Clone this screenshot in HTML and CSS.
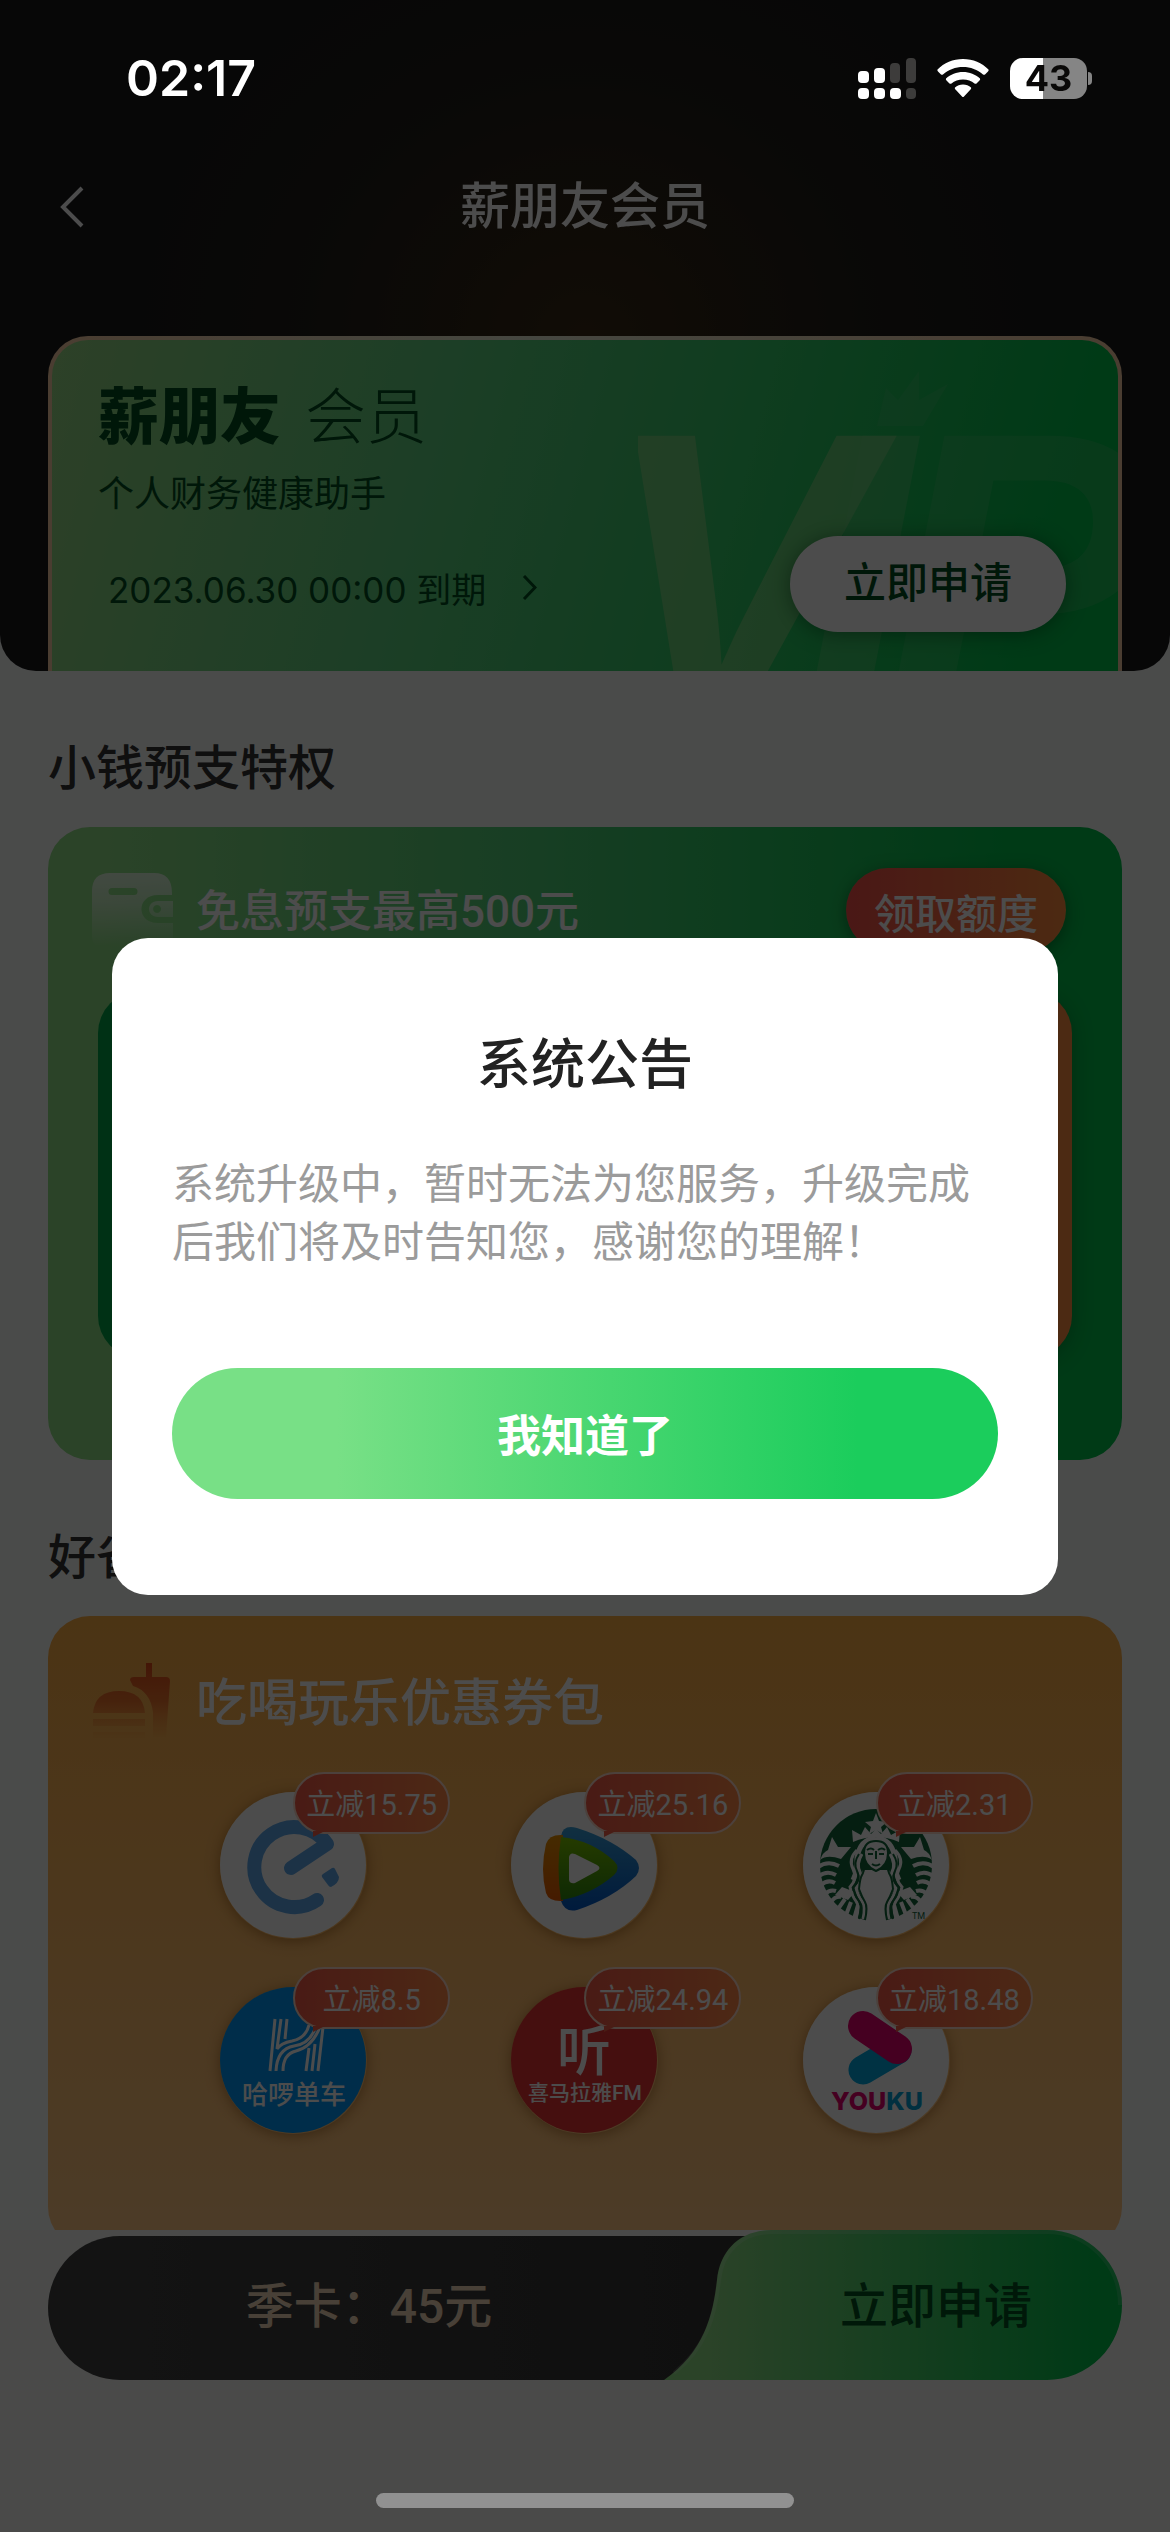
FILE: index.html
```html
<!DOCTYPE html>
<html lang="zh-CN">
<head>
    <meta charset="UTF-8">
    <meta name="viewport" content="width=device-width, initial-scale=1.0">
    <title>薪朋友会员</title>
    <link rel="stylesheet" href="styles.css">
</head>
<body>

    <!-- 状态栏 -->
    <div class="status-bar">
        <span class="time">02:17</span>
        <div class="status-icons">
            <svg class="signal" viewBox="0 0 58 41" width="58" height="41">
                <g fill="#fff">
                    <rect x="0" y="13" width="11" height="12" rx="4"/>
                    <rect x="16" y="10" width="11" height="15" rx="4"/>
                    <rect x="0" y="30" width="11" height="11" rx="4"/>
                    <rect x="16" y="30" width="11" height="11" rx="4"/>
                    <rect x="32" y="30" width="11" height="11" rx="4"/>
                </g>
                <g fill="#3d3c3b">
                    <rect x="32" y="5" width="10" height="20" rx="4"/>
                    <rect x="48" y="0" width="10" height="25" rx="4"/>
                    <rect x="48" y="30" width="10" height="11" rx="4"/>
                </g>
            </svg>
            <svg class="wifi" viewBox="0 0 52 38" width="52" height="38">
                <path d="M26 0C36 0 45 4 51.500 10.500Q52 11.500 51 12.500L48 15.500Q47 16 46 15.500C40.500 10.500 33.500 8 26 8S11.500 10.500 6 15.500Q5 16 4 15.500L1 12.500Q0 11.500 .5 10.500C7 4 16 0 26 0Z" fill="#fff"/>
                <path d="M26 13C32.500 13 38.500 15.500 43 19.500Q43.500 20.500 42.500 21.500L39.500 24.500Q38.500 25 37.500 24.500C34.500 22 30.500 20.500 26 20.500S17.500 22 14.500 24.500Q13.500 25 12.500 24.500L9.500 21.500Q8.500 20.500 9 19.500C13.500 15.500 19.500 13 26 13Z" fill="#fff"/>
                <path d="M26 25.500C29 25.500 32 26.500 34 28.500Q34.500 29.500 33.500 30.500L27 37.500Q26 38.500 25 37.500L18.500 30.500Q17.500 29.500 18 28.500C20 26.500 23 25.500 26 25.500Z" fill="#fff"/>
            </svg>
            <div class="battery"><span>43</span></div>
        </div>
    </div>

    <!-- 顶部会员卡 -->
    <header class="header">
        <nav class="nav">
            <a href="#" class="back" aria-label="返回">
                <svg viewBox="0 0 24 42" width="24" height="42"><path d="M22 2L3 21l19 19" fill="none" stroke="#fff" stroke-width="4"/></svg>
            </a>
            <h1>薪朋友会员</h1>
        </nav>

        <div class="vip-card">
            <svg class="vip-mark" viewBox="0 0 480 335" width="480" height="335" aria-hidden="true">
                <path d="M239 86l9-38 12 12 21-29v29l29-16-25 42z" fill="#3cc86c" fill-opacity=".5"/>
                <g class="vip-text">
                    <text x="-36" y="371" fill="#a4d98c" fill-opacity=".5">V</text>
                    <text x="164" y="371" fill="#6cd080" fill-opacity=".4">I</text>
                    <text x="246" y="371" fill="#58cc7c" fill-opacity=".3">P</text>
                </g>
            </svg>
            <div class="brand"><b>薪朋友</b><span>会员</span></div>
            <p class="slogan">个人财务健康助手</p>
            <div class="vip-row">
                <a href="#" class="expire">2023.06.30 00:00 到期
                    <svg viewBox="0 0 15 25" width="15" height="25"><path d="M2 1l11 11.500L2 24" fill="none" stroke="#004d1f" stroke-width="3"/></svg>
                </a>
                <button class="apply">立即申请</button>
            </div>
        </div>
    </header>

    <main class="content">
        <h2>小钱预支特权</h2>
        <section class="card green-card">
            <div class="card-head">
                <svg class="head-icon" viewBox="0 0 82 74" width="82" height="74">
                    <defs>
                        <linearGradient id="wallet" x1="0" y1="0" x2="0" y2="74" gradientUnits="userSpaceOnUse">
                            <stop offset="0" stop-color="#fff" stop-opacity=".7"/>
                            <stop offset=".4" stop-color="#fff" stop-opacity=".5"/>
                            <stop offset="1" stop-color="#fff" stop-opacity="0"/>
                        </linearGradient>
                    </defs>
                    <path fill="url(#wallet)" fill-rule="evenodd" d="M18 0H62Q80 0 80 20V22H66C44 22 44 50 66 50H81V64Q81 74 70 74H10Q0 74 0 64V18Q0 0 18 0ZM20 15a3 3 0 0 0 0 7H42a3 3 0 0 0 0-7Z"/>
                    <path fill="url(#wallet)" fill-rule="evenodd" d="M66 28H81V44H66C54 44 54 28 66 28ZM65 32a4 4 0 1 0 .1 0Z"/>
                </svg>
                <h3>免息预支最高500元</h3>
                <button class="claim">领取额度</button>
            </div>
            <div class="plans">
                <div class="plan plan-dark"></div>
                <div class="plan plan-orange"></div>
            </div>
        </section>

        <h2>好省</h2>
        <section class="card orange-card">
            <div class="card-head">
                <svg class="head-icon" viewBox="0 0 82 78" width="82" height="78">
                    <defs>
                        <linearGradient id="food" x1="0" y1="0" x2="0" y2="78" gradientUnits="userSpaceOnUse">
                            <stop offset="0" stop-color="#e24a18"/>
                            <stop offset=".5" stop-color="#e86524" stop-opacity=".8"/>
                            <stop offset="1" stop-color="#f58a35" stop-opacity="0"/>
                        </linearGradient>
                    </defs>
                    <g fill="url(#food)">
                        <path d="M54 0h6v14h14q4 0 4 4l-4 56H61V49Q58 28 41 23l-3-6q0-3 4-3h12z"/>
                        <path d="M1 50Q3 28 27 28T53 50Z"/>
                        <path d="M1 56H53V63H1ZM1 69H53V75H1Z"/>
                    </g>
                </svg>
                <h3 class="big">吃喝玩乐优惠券包</h3>
            </div>

            <div class="coupons">
                <div class="coupon">
                    <svg viewBox="0 0 147 147" role="img" aria-label="饿了么">
                        <circle cx="73" cy="73" r="73" fill="#fff"/>
                        <path d="M97 108A40 40 0 1 1 107 52L71 76" fill="none" stroke="#5fa9ea" stroke-width="14" stroke-linejoin="round" stroke-linecap="round"/>
                        <path d="M103 82l9-6q2-1 3 1l4 8q0 6-8 10-2 0-3-2l-6-8q-1-2 1-3z" fill="#5fa9ea"/>
                    </svg>
                    <span class="badge">立减15.75</span>
                </div>
                <div class="coupon">
                    <svg viewBox="0 0 147 147" role="img" aria-label="腾讯视频">
                        <defs>
                            <linearGradient id="tvb" x1="0" y1="0" x2="0" y2="1"><stop offset="0" stop-color="#3aa0d8"/><stop offset="1" stop-color="#0058c8"/></linearGradient>
                            <linearGradient id="tvo" x1="0" y1="0" x2="0" y2="1"><stop offset="0" stop-color="#e89000"/><stop offset="1" stop-color="#e85a00"/></linearGradient>
                            <linearGradient id="tvg" x1="0" y1="0" x2="0" y2="1"><stop offset="0" stop-color="#7cc400"/><stop offset="1" stop-color="#2f8a10"/></linearGradient>
                        </defs>
                        <circle cx="73" cy="73" r="73" fill="#fff"/>
                        <path d="M50 44Q52 32 66 36 101 47 125 68 131 76 125 84 102 106 66 118 54 121 50 109Z" fill="url(#tvb)"/>
                        <path d="M52 43Q38 42 35 52 29 77 35 101 38 110 52 109Z" fill="url(#tvo)"/>
                        <path d="M50 45Q80 48 103 69 110 76 103 83 80 103 50 108 45 76 50 45Z" fill="url(#tvg)"/>
                        <path d="M58 65Q59 60 64 62L86 73Q91 76 86 79L64 91Q59 92 58 88Z" fill="#fff"/>
                    </svg>
                    <span class="badge">立减25.16</span>
                </div>
                <div class="coupon">
                    <svg viewBox="0 0 147 147" role="img" aria-label="星巴克">
                        <circle cx="73" cy="73" r="73" fill="#fff"/>
                        <circle cx="73" cy="73" r="56" fill="#12663a"/>
                        <!-- 皇冠和星星 -->
                        <path d="M73 21l3 8 8 1-6 5 2 7-7-4-7 4 2-7-6-5 8-1z" fill="#fff"/>
                        <path d="M50 50L49 38 58 43 62 35 68 42 73 37 78 42 84 35 88 43 97 38 96 50Q73 40 50 50Z" fill="#fff"/>
                        <!-- 双尾 -->
                        <g fill="#fff">
                            <path d="M29 45L35 55 48 55 38 67Q24 62 17 68 20 60 25 58Z"/>
                            <path d="M117 45L111 55 98 55 108 67Q122 62 129 68 126 60 121 58Z"/>
                            <path d="M32 103L39 95 52 100 45 108Z"/>
                            <path d="M114 103L107 95 94 100 101 108Z"/>
                        </g>
                        <g fill="none" stroke="#fff" stroke-width="4">
                            <path d="M15 75q10-7 21-1M16 84q8-6 17-1M18 93q7-6 14-2M22 102q5-5 11-3M28 110q4-6 10-5M35 117l7-10M43 123l5-13M51 127l4-14"/>
                            <path d="M131 75q-10-7-21-1M130 84q-8-6-17-1M128 93q-7-6-14-2M124 102q-5-5-11-3M118 110q-4-6-10-5M111 117l-7-10M103 123l-5-13M95 127l-4-14"/>
                        </g>
                        <!-- 身体和头发 -->
                        <path d="M60 78L86 78 92 96 83 113 83 131 63 131 63 113 54 96Z" fill="#fff"/>
                        <path d="M73 46Q57 47 54 66 55 78 50 88M73 46Q89 47 92 66 91 78 96 88" fill="none" stroke="#fff" stroke-width="5"/>
                        <g fill="none" stroke="#fff" stroke-width="3">
                            <path d="M54 58q-9 9-4 19t-3 18q2 9 6 14t0 18M59 62q-6 10-2 18t-4 16q2 8 6 13t1 18"/>
                            <path d="M92 58q9 9 4 19t3 18q-2 9-6 14t0 18M87 62q6 10 2 18t4 16q-2 8-6 13t-1 18"/>
                        </g>
                        <g fill="none" stroke="#12663a" stroke-width="2">
                            <path d="M56 62q-6 9-2 17t-4 17q2 8 6 13t0 18M62 72q-1 8-3 11t-3 14q3 8 6 13t0 18"/>
                            <path d="M90 62q6 9 2 17t4 17q-2 8-6 13t0 18M84 72q1 8 3 11t3 14q-3 8-6 13t0 18"/>
                        </g>
                        <path d="M61 61Q61 49 73 49T85 61Q85 74 73 79 61 74 61 61Z" fill="#fff" stroke="#12663a" stroke-width="2"/>
                        <path d="M64 58q4-3 7 0M75 58q4-3 7 0M65 62h5M76 62h5M73 59v8M69 72q4 3 8 0" fill="none" stroke="#12663a" stroke-width="2"/>
                        <text x="109" y="127" font-size="9" fill="#12663a">TM</text>
                    </svg>
                    <span class="badge">立减2.31</span>
                </div>
                <div class="coupon">
                    <svg viewBox="0 0 147 147" role="img" aria-label="哈啰单车">
                        <circle cx="73" cy="73" r="73" fill="#0098f8"/>
                        <g fill="none" stroke="#fff" stroke-width="3">
                            <path d="M55 32L50 84M61 32L57 62Q61 56 72 54 86 51 89 38M67 32L65 52M56 84Q57 62 74 59 89 57 95 42M63 84Q63 67 76 64 92 60 100 40M86 84L89 61M92 84L95 57M98 84L103 40"/>
                        </g>
                        <text x="74" y="117" font-size="26" font-weight="500" text-anchor="middle" fill="#fff">哈啰单车</text>
                    </svg>
                    <span class="badge">立减8.5</span>
                </div>
                <div class="coupon">
                    <svg viewBox="0 0 147 147" role="img" aria-label="喜马拉雅FM">
                        <circle cx="73" cy="73" r="73" fill="#e63432"/>
                        <text x="73" y="84" font-size="54" font-weight="500" text-anchor="middle" fill="#fff">听</text>
                        <text x="74" y="113" font-size="21" font-weight="500" text-anchor="middle" fill="#fff">喜马拉雅FM</text>
                    </svg>
                    <span class="badge">立减24.94</span>
                </div>
                <div class="coupon">
                    <svg viewBox="0 0 147 147" role="img" aria-label="优酷">
                        <circle cx="73" cy="73" r="73" fill="#fff"/>
                        <path d="M60 83L94 63" stroke="#00a8e0" stroke-width="29" stroke-linecap="round"/>
                        <path d="M60 39L94 62" stroke="#e6006e" stroke-width="30" stroke-linecap="round"/>
                        <text class="youku" x="74" y="123" text-anchor="middle" fill="#e6006e">YOU<tspan fill="#00a0d8">KU</tspan></text>
                    </svg>
                    <span class="badge">立减18.48</span>
                </div>
            </div>
        </section>
    </main>

    <!-- 底部购买栏 -->
    <footer class="buy-bar">
        <div class="buy">
            <div class="price">季卡：45元</div>
            <button class="buy-btn">
                <svg viewBox="0 0 458 150" width="458" height="150" aria-hidden="true">
                    <defs>
                        <linearGradient id="buy" x1="0" y1="0" x2="1" y2="0">
                            <stop offset=".1" stop-color="#8fdf86"/>
                            <stop offset=".95" stop-color="#00c14b"/>
                        </linearGradient>
                    </defs>
                    <path d="M0 150C40 122 49 86 53 50 56 20 76 0 108 0H383A75 75 0 0 1 383 150Z" fill="url(#buy)"/>
                    <path d="M10 143C42 118 51 86 55 50 58 22 77 2 108 2H383A73 73 0 0 1 456 75" fill="none" stroke="#fff" stroke-opacity=".15" stroke-width="4"/>
                </svg>
                <span>立即申请</span>
            </button>
        </div>
    </footer>

    <!-- 系统公告弹窗 -->
    <div class="mask">
        <div class="dialog" role="dialog" aria-labelledby="dialogTitle">
            <h2 id="dialogTitle">系统公告</h2>
            <p>系统升级中，暂时无法为您服务，升级完成后我们将及时告知您，感谢您的理解！</p>
            <button class="ok">我知道了</button>
        </div>
    </div>

    <div class="home-indicator"></div>

</body>
</html>
```
FILE: styles.css
```css
* {
    box-sizing: border-box;
}

body {
    margin: 0;
    padding-bottom: 283px;
    background-color: #f9faf9;
    color: #333;
    font-family: Roboto, "Noto Sans CJK SC", sans-serif;
    font-size: 36px;
}

h1, h2, h3, p {
    margin: 0;
    font-weight: 500;
}

a {
    color: inherit;
    text-decoration: none;
}

button {
    border: none;
    padding: 0;
    font-family: inherit;
    font-weight: 500;
    cursor: pointer;
}

svg {
    display: block;
}

/* 状态栏 */
.status-bar {
    position: fixed;
    top: 0;
    left: 0;
    right: 0;
    z-index: 20;
    height: 156px;
    padding: 0 78px 0 126px;
    display: flex;
    align-items: center;
    justify-content: space-between;
    color: #fff;
    font-family: Inter, sans-serif;
}

.time {
    font-size: 50px;
    font-weight: 600;
}

.status-icons {
    display: flex;
    align-items: center;
    gap: 21px;
}

.battery {
    position: relative;
    width: 77px;
    height: 41px;
    margin-right: 5px;
    border-radius: 13px;
    background: linear-gradient(90deg, #fff 43%, #858585 43%);
    color: #0a0908;
    font-size: 36px;
    font-weight: 700;
    line-height: 41px;
    text-align: center;
}

.battery::after {
    content: "";
    position: absolute;
    right: -5px;
    top: 14px;
    width: 4px;
    height: 13px;
    border-radius: 0 4px 4px 0;
    background-color: #858585;
}

/* 顶部 */
.header {
    padding: 141px 48px 0;
    border-radius: 0 0 36px 36px;
    background: radial-gradient(ellipse 500px 460px at 50% 336px, #3a2a16, #1f1d19 60%, #18181a);
    overflow: hidden;
}

.nav {
    position: relative;
    display: flex;
    align-items: center;
    justify-content: center;
    height: 132px;
    margin-bottom: 63px;
    color: #fff;
}

.nav h1 {
    font-size: 50px;
    line-height: 72px;
}

.back {
    position: absolute;
    left: 12px;
}

.vip-card {
    position: relative;
    height: 335px;
    padding: 42px 52px 0 46px;
    border: 4px solid transparent;
    border-bottom: none;
    border-radius: 40px 40px 0 0;
    background: linear-gradient(105deg, #98d985 0, #5fd080 35%, #38cc6b 60%, #00c14b 92%) padding-box,
                linear-gradient(90deg, #f8cda4, #e8efd8 45%, #f8cda4) border-box;
    color: #004d1f;
    overflow: hidden;
}

.vip-mark {
    position: absolute;
    right: 0;
    top: 0;
}

.vip-text {
    font-family: "Liberation Sans Narrow", "Liberation Sans", sans-serif;
    font-size: 400px;
    font-weight: 700;
    font-style: italic;
}

.brand {
    position: relative;
    display: flex;
    align-items: center;
    gap: 24px;
    height: 72px;
    font-size: 61px;
    line-height: 72px;
}

.brand b {
    font-weight: 900;
}

.brand span {
    font-weight: 300;
}

.slogan {
    position: relative;
    margin-top: 16px;
    line-height: 50px;
    font-weight: 400;
}

.vip-row {
    position: relative;
    display: flex;
    align-items: center;
    justify-content: space-between;
    margin-top: 16px;
}

.expire {
    display: flex;
    align-items: center;
    gap: 36px;
    margin-left: 10px;
    padding-top: 6px;
    font-family: Inter, "Noto Sans CJK SC", sans-serif;
    font-size: 35px;
}

.apply {
    width: 276px;
    height: 96px;
    border-radius: 48px;
    background-color: #fff;
    box-shadow: 0 2px 20px rgba(0, 60, 20, 0.5);
    color: #004d1f;
    font-size: 42px;
    line-height: 96px;
}

/* 特权内容 */
.content {
    padding: 0 48px;
}

.content h2 {
    margin: 62px 0 22px;
    font-size: 48px;
    line-height: 72px;
}

.card {
    border-radius: 42px;
    color: #fff;
}

.green-card {
    padding: 41px 50px 102px;
    background: linear-gradient(90deg, #90e086 5%, #4fd077 45%, #00c14b 90%);
}

.card-head {
    display: flex;
    align-items: center;
    height: 84px;
    margin: 0 6px 39px -6px;
}

.card-head h3 {
    margin-left: 22px;
    padding-top: 4px;
    font-size: 44px;
    line-height: 72px;
}

.card-head .big {
    font-size: 51px;
}

.claim {
    width: 220px;
    height: 84px;
    margin-left: auto;
    padding-top: 2px;
    border-radius: 42px;
    background: linear-gradient(90deg, #f8504a, #ff8c3c);
    box-shadow: 0 4px 16px rgba(0, 60, 20, 0.5);
    color: #fff;
    font-size: 41px;
}

.plans {
    display: grid;
    grid-template-columns: 1fr 1fr;
    gap: 24px;
}

.plan {
    height: 367px;
    border-radius: 42px;
    box-shadow: 0 4px 20px rgba(0, 80, 30, 0.4);
}

.plan-dark {
    background-color: #00a648;
    box-shadow: none;
}

.plan-orange {
    background-color: #ff8c42;
}

.orange-card {
    padding: 44px 50px 115px;
    background: linear-gradient(#fcad44, #ffc886);
}

.orange-card .card-head {
    margin-bottom: 48px;
}

.coupons {
    display: grid;
    grid-template-columns: repeat(3, 1fr);
    gap: 48px 0;
    margin: 0 50px;
}

.coupon {
    position: relative;
    justify-self: center;
    width: 147px;
    height: 147px;
    border-radius: 50%;
    box-shadow: 0 2px 14px rgba(120, 60, 0, 0.5);
}

.badge {
    position: absolute;
    left: 73px;
    top: -20px;
    width: 157px;
    height: 62px;
    border: 2px solid #ffd9c8;
    border-radius: 31px;
    background: linear-gradient(90deg, #f55a46, #ff8848);
    font-size: 29px;
    line-height: 62px;
    text-align: center;
    white-space: nowrap;
}

.badge::after {
    content: "";
    position: absolute;
    left: 18px;
    bottom: -5px;
    border-top: 6px solid #f56046;
    border-right: 12px solid transparent;
}

.youku {
    font-family: Inter, sans-serif;
    font-size: 25px;
    font-weight: 800;
}

/* 底部购买栏 */
.buy-bar {
    position: fixed;
    left: 0;
    right: 0;
    bottom: 0;
    height: 302px;
    padding: 0 48px;
    background-color: #f7f8f4;
}

.buy {
    display: flex;
    align-items: flex-end;
    height: 150px;
    font-size: 48px;
    font-weight: 500;
}

.price {
    flex: 1;
    height: 144px;
    border-radius: 72px 0 0 72px;
    background: linear-gradient(90deg, #424242, #353535);
    color: #f0d8b8;
    line-height: 142px;
    text-align: center;
}

.buy-btn {
    position: relative;
    width: 432px;
    height: 150px;
    background: linear-gradient(#353535, #353535) 0 6px / 100px 100% no-repeat;
    color: #00501f;
    font-size: 48px;
    line-height: 154px;
}

.buy-btn svg {
    position: absolute;
    right: 0;
    top: 0;
}

.buy-btn span {
    position: relative;
    margin-left: 60px;
}

/* 弹窗 */
.mask {
    position: fixed;
    inset: 0;
    z-index: 10;
    display: flex;
    align-items: center;
    justify-content: center;
    padding: 0 112px;
    background-color: rgba(0, 0, 0, 0.7);
}

.dialog {
    flex: 1;
    padding: 92px 60px 96px;
    border-radius: 36px;
    background-color: #fff;
    text-align: center;
}

.dialog h2 {
    color: #222;
    font-size: 54px;
    line-height: 72px;
}

.dialog p {
    margin: 54px 0 96px;
    color: #9b9b9b;
    font-size: 42px;
    font-weight: 400;
    line-height: 58px;
    text-align: left;
}

.ok {
    width: 100%;
    height: 131px;
    border-radius: 66px;
    background: linear-gradient(90deg, #78e086 20%, #1bcd5c 83%);
    color: #fff;
    font-size: 44px;
    font-weight: 700;
}

.home-indicator {
    position: fixed;
    left: 50%;
    bottom: 24px;
    z-index: 20;
    width: 418px;
    height: 15px;
    margin-left: -209px;
    border-radius: 8px;
    background-color: #919191;
}
```
